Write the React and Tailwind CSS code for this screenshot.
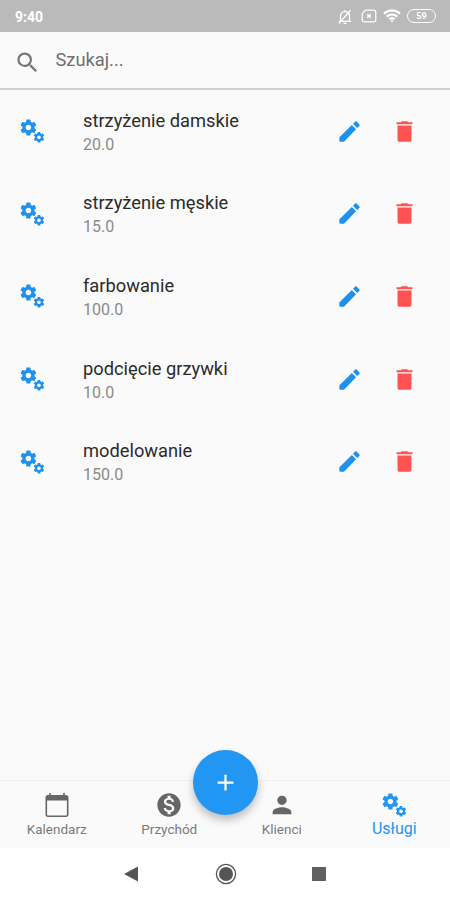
import React, { useState } from "react";
import {
  MdSearch,
  MdMonetizationOn,
  MdPerson,
  MdAdd,
} from "react-icons/md";

const services = [
  { id: 1, name: "strzyżenie damskie", price: "20.0" },
  { id: 2, name: "strzyżenie męskie", price: "15.0" },
  { id: 3, name: "farbowanie", price: "100.0" },
  { id: 4, name: "podcięcie grzywki", price: "10.0" },
  { id: 5, name: "modelowanie", price: "150.0" },
];

const GEAR =
  "M19.43 12.98c.04-.32.07-.64.07-.98s-.03-.66-.07-.98l2.11-1.65c.19-.15.24-.42.12-.64l-2-3.46c-.12-.22-.39-.3-.61-.22l-2.49 1c-.52-.4-1.08-.73-1.69-.98l-.38-2.65C14.46 2.18 14.25 2 14 2h-4c-.25 0-.46.18-.49.42l-.38 2.65c-.61.25-1.17.59-1.69.98l-2.49-1c-.23-.09-.49 0-.61.22l-2 3.46c-.13.22-.07.49.12.64l2.11 1.65c-.04.32-.07.65-.07.98s.03.66.07.98l-2.11 1.65c-.19.15-.24.42-.12.64l2 3.46c.12.22.39.3.61.22l2.49-1c.52.4 1.08.73 1.69.98l.38 2.65c.03.24.24.42.49.42h4c.25 0 .46-.18.49-.42l.38-2.65c.61-.25 1.17-.59 1.69-.98l2.49 1c.23.09.49 0 .61-.22l2-3.46c.12-.22.07-.49-.12-.64l-2.11-1.65zM12 15.5c-1.93 0-3.5-1.57-3.5-3.5s1.57-3.5 3.5-3.5 3.5 1.57 3.5 3.5-1.57 3.5-3.5 3.5z";

const GearsIcon = ({ className }) => (
  <svg viewBox="0 0 28 28" className={className} fill="currentColor">
    <path d={GEAR} transform="translate(.8 .9) scale(.8)" />
    <path d={GEAR} transform="translate(14.6 13.9) scale(.53)" />
  </svg>
);

const CalendarIcon = ({ className }) => (
  <svg viewBox="0 0 28 28" className={className} fill="currentColor">
    <path d="M5 4h1.2V2h1.6v2h12.4V2h1.6v2H23c1.5 0 2.5 1 2.5 2.4v17.2c0 1.4-1 2.4-2.5 2.4H5c-1.5 0-2.5-1-2.5-2.4V6.400C2.500 5 3.500 4 5 4zm-.9 5.400v14.100c0 .6.4 1 1 1h17.800c.6 0 1-.4 1-1V9.400z" />
  </svg>
);

const PencilIcon = ({ className }) => (
  <svg viewBox="0 0 24 24" className={className} fill="currentColor">
    <path d="M3 17.4v3c0 .4.3.7.7.7h3c.2 0 .4-.1.6-.3L17.800 9.900l-3.700-3.700L3.300 16.900c-.2.1-.3.3-.3.5zM20.700 7.100c.5-.5.5-1.200 0-1.600l-2.200-2.200c-.5-.5-1.200-.5-1.600 0l-1.800 1.800 3.800 3.800z" />
  </svg>
);

const TrashIcon = ({ className }) => (
  <svg viewBox="0 0 24 24" className={className} fill="currentColor">
    <path d="M5.800 6.700v12.600c0 1.100.7 1.900 1.800 1.900h8.800c1.100 0 1.800-.8 1.800-1.900V6.700zM15.500 3.800l-1-1h-5l-1 1H4.900v1.700h14.200V3.800z" />
  </svg>
);

// Status bar: muted bell, missing SIM, wifi, battery
const StatusBar = () => (
  <div className="flex h-8 items-center bg-[#bababa] pl-[15px] pr-[14px] text-white">
    <span className="flex-1 pt-[2px] text-[14px] leading-4 font-bold">9:40</span>
    <svg viewBox="0 0 14 16" className="mt-px mr-[9px] h-4 w-3.5" fill="none" stroke="currentColor" strokeWidth="1.3">
      <path d="M2.500 12V7.500C2.500 4.500 4.300 2.600 7 2.600s4.500 1.900 4.500 4.900V12M.8 12.300h12.400M5.500 14.300h3M7 1v1.600M1 14.500 12.500 1.200" />
    </svg>
    <svg viewBox="0 0 16 14" className="mr-[6px] h-3.5 w-4" fill="none" stroke="currentColor" strokeWidth="1.2">
      <path d="M4.500 1.200h8.200c1.300 0 2.100.8 2.100 2.100v7.400c0 1.300-.8 2.100-2.100 2.100H3.300c-1.300 0-2.100-.8-2.100-2.100V4.500z" />
      <path d="m6.200 5.200 3.600 3.600m0-3.600L6.200 8.800" strokeWidth="1.500" />
    </svg>
    <svg viewBox="0 0 18 14" className="mr-[6px] h-3.5 w-[18px]" fill="none" stroke="currentColor" strokeWidth="2.200">
      <path d="M1 4.600a11.500 11.500 0 0 1 16 0M3.800 7.600a7.500 7.500 0 0 1 10.400 0M6.400 10.300a3.800 3.800 0 0 1 5.200 0" />
      <path d="m9 13.600-1.800-2h3.600z" fill="currentColor" stroke="none" />
    </svg>
    <span className="flex h-[14px] w-[29px] items-center justify-center rounded-full border-[1.5px] border-white text-[9px] leading-none font-bold">
      59
    </span>
  </div>
);

const SearchBar = () => (
  <div className="flex h-[58px] items-center border-b-2 border-[#cfcfcf] pl-[14px]">
    <MdSearch className="mt-[5px] h-[27px] w-[27px] text-[#757575]" />
    <input
      placeholder="Szukaj..."
      className="ml-[14.5px] w-72 bg-transparent text-[18.3px] leading-6 text-[#707070] outline-none placeholder:text-[#707070]"
    />
  </div>
);

const ServiceRow = ({ service }) => (
  <li className="flex h-[82.6px] items-center">
    <GearsIcon className="ml-[18px] h-7 w-7 text-[#1e90ed]" />
    <div className="ml-[37px] flex-1 pt-[2px]">
      <p className="text-[18.3px] leading-6 text-[#2b2b2b]">{service.name}</p>
      <p className="text-[16px] leading-[23px] text-[#8a8a8a]">{service.price}</p>
    </div>
    <button className="mr-7 text-[#1e90ed]">
      <PencilIcon className="h-[27px] w-[27px]" />
    </button>
    <button className="mr-8 text-[#ff5252]">
      <TrashIcon className="h-[27px] w-[27px]" />
    </button>
  </li>
);

const tabs = [
  { label: "Kalendarz", Icon: CalendarIcon },
  { label: "Przychód", Icon: MdMonetizationOn },
  { label: "Klienci", Icon: MdPerson },
  { label: "Usługi", Icon: GearsIcon },
];

const App = () => {
  const [active, setActive] = useState("Usługi");

  return (
    <div className="flex h-[900px] w-[450px] flex-col overflow-hidden bg-[#fafafa] font-[Roboto,sans-serif]">
      <StatusBar />
      <SearchBar />

      <ul className="flex-1">
        {services.map((s) => (
          <ServiceRow key={s.id} service={s} />
        ))}
      </ul>

      {/* Bottom navigation */}
      <nav className="relative grid h-[68px] grid-cols-4 border-t border-[#f0f0f0]">
        {tabs.map(({ label, Icon }) => (
          <button
            key={label}
            onClick={() => setActive(label)}
            className={`flex flex-col items-center pt-[10px] pl-px ${
              active === label ? "text-[#2196f3]" : "text-[#666666]"
            }`}
          >
            <Icon className="h-7 w-7" />
            <span
              className={
                active === label
                  ? "text-[16px] leading-[19px]"
                  : "pt-px text-[13.5px] leading-[19px] text-[#7a7a7a]"
              }
            >
              {label}
            </span>
          </button>
        ))}
        <button className="absolute -top-[31px] left-[193px] flex h-[65px] w-[65px] items-center justify-center rounded-full bg-[#2196f3] text-white shadow-[0_5px_8px_rgba(0,0,0,0.25)]">
          <MdAdd className="h-[27px] w-[27px]" />
        </button>
      </nav>

      {/* Android system buttons */}
      <div className="flex h-[52px] items-center bg-white text-[#555555]">
        <svg viewBox="0 0 14 16" className="ml-[124px] h-4 w-3.5" fill="currentColor">
          <path d="M14 .5v15L0 8z" />
        </svg>
        <svg viewBox="0 0 22 22" className="ml-[77px] h-[22px] w-[22px]" fill="none" stroke="currentColor">
          <circle cx="11" cy="11" r="9.600" strokeWidth="1.300" />
          <circle cx="11" cy="11" r="7" fill="currentColor" stroke="none" />
        </svg>
        <span className="ml-[75px] h-3.5 w-3.5 bg-[#606060]" />
      </div>
    </div>
  );
};

export default App;
